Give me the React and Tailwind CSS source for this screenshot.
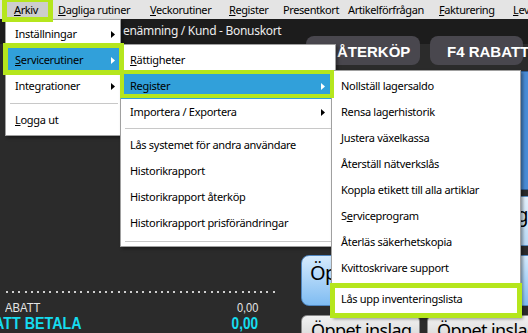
const GREEN = '#b5e61d';

function Arrow({ white }) {
  return (
    <svg width="4" height="7" viewBox="0 0 4 7" className="shrink-0">
      <path d="M0 0 L4 3.5 L0 7 Z" fill={white ? '#ffffff' : '#000000'} />
    </svg>
  );
}

function Item({ children, arrow, active, pr = 'pr-[5px]' }) {
  return (
    <div
      className={
        'flex h-[26px] items-center justify-between pl-[9px] ' +
        pr +
        (active ? ' bg-[#31a0da]' : '')
      }
    >
      <span className="whitespace-nowrap">{children}</span>
      {arrow ? <Arrow white={active} /> : null}
    </div>
  );
}

function Sep({ h, mt }) {
  return (
    <div className={'flex flex-col ' + h}>
      <div className={'ml-[4px] mr-[2px] h-[2px] border-t border-b border-t-[#c8c8c8] border-b-white ' + mt} />
    </div>
  );
}

export default function App() {
  return (
    <div className="relative h-[333px] w-[528px] overflow-hidden bg-[#2b2b2b] font-['Noto_Sans',sans-serif]">
      {/* menu bar */}
      <div className="flex h-[19px] bg-[#e4e4e4] text-[11px] leading-[19px] tracking-[-0.4px] text-black">
        <div className="w-[7px] shrink-0" />
        <div className="w-[44px] shrink-0 bg-[#cdcdcd] pl-[7px]"><u>A</u>rkiv</div>
        <div className="w-[92px] shrink-0 whitespace-nowrap pl-[7px]"><u>D</u>agliga rutiner</div>
        <div className="w-[79px] shrink-0 whitespace-nowrap pl-[7px]"><u>V</u>eckorutiner</div>
        <div className="w-[54px] shrink-0 whitespace-nowrap pl-[7px]"><u>R</u>egister</div>
        <div className="w-[65px] shrink-0 whitespace-nowrap pl-[7px]">Presentkort</div>
        <div className="w-[91px] shrink-0 whitespace-nowrap pl-[7px]">Artikelförfrågan</div>
        <div className="w-[74px] shrink-0 whitespace-nowrap pl-[7px]"><u>F</u>akturering</div>
        <div className="shrink-0 whitespace-nowrap pl-[7px]"><u>L</u>ev</div>
      </div>

      {/* title strip */}
      <div className="h-[25px] whitespace-nowrap bg-[#1c1c1c] pl-[123px] text-[12px] leading-[24px] tracking-[-0.3px] text-[#ececec]">
        enämning / Kund - Bonuskort
      </div>

      {/* action buttons */}
      <div className="relative -mt-[8px] flex h-[29px] gap-[10px] pl-[306px] font-['Liberation_Sans',sans-serif] text-[15px] font-bold text-white">
        <div className="flex w-[114px] shrink-0 items-center rounded-[8px] bg-[#49474e] pl-[31px] pt-[4px]">ÅTERKÖP</div>
        <div className="flex w-[93px] shrink-0 items-center whitespace-nowrap rounded-[8px] bg-[#49474e] pl-[17px] pt-[4px]">F4 RABATT</div>
      </div>

      {/* main */}
      <div className="flex h-[268px]">
        {/* left totals panel */}
        <div className="flex w-[301px] shrink-0 flex-col justify-end overflow-hidden font-['Liberation_Sans',sans-serif]">
          <div className="ml-[5px] mr-[22px] h-[2px] bg-[repeating-linear-gradient(90deg,transparent_0_1px,#d0d0d0_1px_3px,transparent_3px_6.2px)]" />
          <div className="mr-[43px] mt-[9px] flex h-[13px] items-center justify-between pl-[5px] text-[12.5px] leading-[13px] text-[#e6e6e6]">
            <span className="inline-block origin-left scale-x-[0.9]">ABATT</span>
            <span className="inline-block origin-right scale-x-[0.88]">0,00</span>
          </div>
          <div className="mr-[43px] flex h-[18px] items-center justify-between text-[17px] font-bold leading-[18px] text-[#16dcef]">
            <span className="-ml-[6px] inline-block origin-left scale-x-[0.84] whitespace-nowrap">ATT BETALA</span>
            <span className="inline-block origin-right scale-x-[0.8]">0,00</span>
          </div>
        </div>

        {/* right button grid */}
        <div className="flex flex-1 flex-col overflow-hidden pt-[6px] text-[20px] tracking-[-0.6px] text-black">
          <div className="flex h-[119px] shrink-0 gap-[7px]">
            <div className="w-[119px] shrink-0 rounded-[8px] border border-[#2d5f99] bg-[#4a8cd6]" />
            <div className="w-[120px] shrink-0 rounded-[8px] border border-[#2d5f99] bg-[#4a8cd6]" />
          </div>
          <div className="mt-[6px] flex h-[50px] shrink-0 gap-[7px]">
            <div className="w-[119px] shrink-0 rounded-[8px] border border-[#5a8fc4] bg-[linear-gradient(#e4f1fc,#b9d9f5)]" />
            <div className="flex w-[120px] shrink-0 justify-end whitespace-nowrap rounded-[8px] border border-[#5a8fc4] bg-[linear-gradient(#e4f1fc,#b9d9f5)] pr-[18px] pt-[3px]">Öppet inslag</div>
          </div>
          <div className="mt-[9px] flex h-[51px] shrink-0 gap-[7px]">
            <div className="w-[119px] shrink-0 whitespace-nowrap rounded-[8px] border border-[#4f86c0] bg-[linear-gradient(#d6ebfd,#7fbcf2)] pl-[8px] pt-[2px]">Öppet inslag</div>
            <div className="w-[120px] shrink-0 rounded-[8px] border border-[#4f86c0] bg-[linear-gradient(#d6ebfd,#7fbcf2)]" />
          </div>
          <div className="mt-[9px] flex h-[30px] shrink-0 gap-[7px] text-[18px] tracking-[-0.6px]">
            <div className="w-[119px] shrink-0 whitespace-nowrap rounded-[6px] border border-[#8a8a8a] bg-[linear-gradient(#f2f2f2,#d2d2d2)] pl-[9px] pt-[2px] leading-[24px]">Öppet inslag</div>
            <div className="w-[120px] shrink-0 whitespace-nowrap rounded-[6px] border border-[#8a8a8a] bg-[linear-gradient(#f2f2f2,#d2d2d2)] pl-[9px] pt-[2px] leading-[24px]">Öppet inslag</div>
          </div>
        </div>
      </div>

      {/* Arkiv dropdown */}
      <div className="absolute left-[5px] top-[19px] h-[117px] w-[116px] border border-[#a0a0a0] bg-white pt-[1px] text-[11px] tracking-[-0.3px] text-black shadow-[2px_2px_3px_rgba(0,0,0,0.4)]">
        <Item arrow>Inställningar</Item>
        <Item arrow active><u>S</u>ervicerutiner</Item>
        <Item arrow>Integrationer</Item>
        <Sep h="h-[8px]" mt="mt-[4px]" />
        <Item><u>L</u>ogga ut</Item>
      </div>

      {/* Servicerutiner submenu */}
      <div className="absolute left-[120px] top-[44px] h-[203px] w-[216px] border border-[#a0a0a0] bg-white pt-[2px] text-[11px] tracking-[-0.3px] text-black shadow-[2px_2px_3px_rgba(0,0,0,0.4)]">
        <Item><u>R</u>ättigheter</Item>
        <Item arrow active pr="pr-[10px]">Register</Item>
        <Item arrow pr="pr-[10px]">Importera / Exportera</Item>
        <Sep h="h-[7px]" mt="mt-[3px]" />
        <Item>Lås systemet för andra användare</Item>
        <Item>Historikrapport</Item>
        <Item>Historikrapport återköp</Item>
        <Item>Historikrapport prisförändringar</Item>
        <Sep h="h-[8px]" mt="mt-[5px]" />
      </div>

      {/* Register submenu */}
      <div className="absolute left-[331px] top-[70px] h-[247px] w-[190px] border border-[#a0a0a0] bg-white pt-[2px] text-[11px] tracking-[-0.3px] text-black shadow-[2px_2px_3px_rgba(0,0,0,0.4)]">
        <Item>Nollställ lagersaldo</Item>
        <Item>Rensa lagerhistorik</Item>
        <Item>Justera växelkassa</Item>
        <Item>Återställ nätverkslås</Item>
        <Item>Koppla etikett till alla artiklar</Item>
        <Item>S<u>e</u>rviceprogram</Item>
        <Item>Återläs säkerhetskopia</Item>
        <Item>Kvittoskrivare support</Item>
        <Sep h="h-[5px]" mt="mt-[2px]" />
        <Item>Lås upp inventeringslista</Item>
      </div>

      {/* green annotation frames */}
      <div className="pointer-events-none absolute left-[2px] top-[-3px] h-[25px] w-[51px] border-[5px] border-[#b5e61d]" />
      <div className="pointer-events-none absolute left-[3px] top-[43px] h-[32px] w-[121px] border-[5px] border-[#b5e61d]" />
      <div className="pointer-events-none absolute left-[120px] top-[70px] h-[28px] w-[214px] border-[4px] border-[#b5e61d]" />
      <div className="pointer-events-none absolute left-[330px] top-[283px] h-[35px] w-[192px] border-[5px] border-[#b5e61d]" />
    </div>
  );
}
